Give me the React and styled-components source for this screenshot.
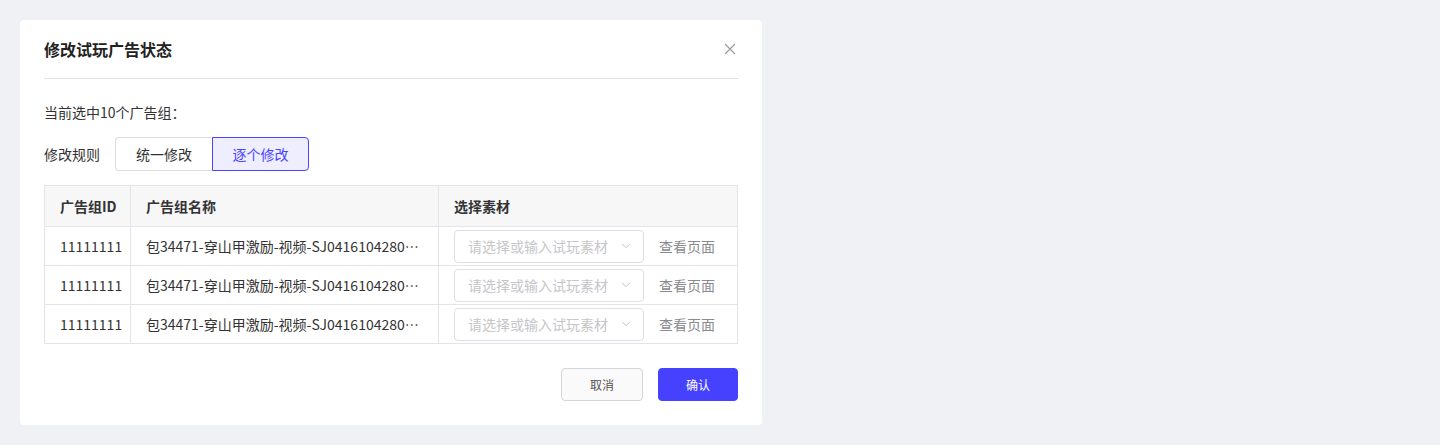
import React, { useState } from 'react'
import styled, { createGlobalStyle } from 'styled-components'

const GlobalStyle = createGlobalStyle`
  body {
    margin: 0;
    background: #f0f1f5;
    font-family: "Noto Sans CJK SC", "Liberation Sans", sans-serif;
    color: #333;
  }
`

const Page = styled.div`
  padding: 20px;
  height: 445px;
  box-sizing: border-box;
`

const Modal = styled.div`
  width: 742px;
  height: 405px;
  box-sizing: border-box;
  background: #fff;
  border-radius: 4px;
  padding: 0 24px;
  display: flex;
  flex-direction: column;
`

const Header = styled.div`
  display: flex;
  align-items: center;
  justify-content: space-between;
  height: 58px;
  border-bottom: 1px solid #e1e1e8;
`

const Title = styled.h2`
  margin: 0;
  font-size: 16px;
  font-weight: 600;
  color: #222;
`

const CloseButton = styled.button`
  border: 0;
  background: none;
  padding: 0;
  margin-right: 2px;
  display: flex;
  color: #9a9a9a;
  cursor: pointer;
`

const Info = styled.div`
  margin-top: 22px;
  font-size: 14px;
  line-height: 22px;
  color: #333;
`

const RuleRow = styled.div`
  display: flex;
  align-items: center;
  margin-top: 14px;
  gap: 15px;
`

const Label = styled.span`
  font-size: 14px;
  color: #333;
`

const Segmented = styled.div`
  display: flex;
`

const Segment = styled.button`
  width: 97px;
  height: 34px;
  box-sizing: border-box;
  font-family: inherit;
  font-size: 14px;
  cursor: pointer;
  border: 1px solid ${p => (p.active ? '#4a44ff' : '#dcdce2')};
  background: ${p => (p.active ? '#efeeff' : '#fff')};
  color: ${p => (p.active ? '#4a44ff' : '#333')};
  border-radius: ${p => (p.first ? '4px 0 0 4px' : '0 4px 4px 0')};
  ${p => (p.first ? 'border-right: none;' : '')}
  ${p => (!p.active && !p.first ? 'border-left: none;' : '')}
`

const Table = styled.table`
  margin-top: 14px;
  width: 694px;
  border-collapse: collapse;
  font-size: 14px;
  table-layout: fixed;
`

const Th = styled.th`
  height: 40px;
  background: #f7f7f8;
  border: 1px solid #e4e4ea;
  text-align: left;
  font-weight: 600;
  color: #333;
  white-space: nowrap;
  padding: ${p => (p.narrow ? '0 0 0 15px' : '0 15px')};
`

const Td = styled.td`
  height: 38px;
  border: 1px solid #e4e4ea;
  padding: ${p => (p.narrow ? '0 0 0 15px' : '0 15px')};
  color: #333;
  white-space: nowrap;
  overflow: hidden;
  text-overflow: ${p => (p.narrow ? 'clip' : 'ellipsis')};
`

const PickCell = styled.div`
  display: flex;
  align-items: center;
  gap: 15px;
`

const Select = styled.div`
  width: 190px;
  height: 33px;
  box-sizing: border-box;
  border: 1px solid #dedee4;
  border-radius: 4px;
  display: flex;
  align-items: center;
  justify-content: space-between;
  padding: 0 12px 0 13px;
  color: #c6c6ca;
  font-size: 14px;
`

const LinkText = styled.span`
  color: #8a8a8f;
  font-size: 14px;
`

const Footer = styled.div`
  display: flex;
  justify-content: flex-end;
  gap: 15px;
  margin-top: 24px;
`

const Button = styled.button`
  width: ${p => (p.primary ? '80px' : '82px')};
  height: 33px;
  box-sizing: border-box;
  font-family: inherit;
  font-size: 12px;
  border-radius: 4px;
  cursor: pointer;
  border: 1px solid ${p => (p.primary ? '#4640ff' : '#d4d4da')};
  background: ${p => (p.primary ? '#4640ff' : '#fafafa')};
  color: ${p => (p.primary ? '#fff' : '#555')};
`

const CloseIcon = () => (
  <svg width="12" height="12" viewBox="0 0 12 12">
    <path d="M1 1L11 11M11 1L1 11" stroke="currentColor" strokeWidth="1.1" />
  </svg>
)

const ChevronDown = () => (
  <svg width="10" height="6" viewBox="0 0 10 6">
    <path d="M1 1L5 4.5L9 1" fill="none" stroke="#c6c6ca" strokeWidth="1" />
  </svg>
)

const rows = [1, 2, 3].map(i => ({
  key: i,
  id: '11111111',
  name: '包34471-穿山甲激励-视频-SJ04161042800001',
}))

export default function App() {
  const [rule, setRule] = useState('each')

  return (
    <>
      <GlobalStyle />
      <Page>
        <Modal>
          <Header>
            <Title>修改试玩广告状态</Title>
            <CloseButton>
              <CloseIcon />
            </CloseButton>
          </Header>
          <Info>当前选中10个广告组：</Info>
          <RuleRow>
            <Label>修改规则</Label>
            <Segmented>
              <Segment first active={rule === 'all'} onClick={() => setRule('all')}>
                统一修改
              </Segment>
              <Segment active={rule === 'each'} onClick={() => setRule('each')}>
                逐个修改
              </Segment>
            </Segmented>
          </RuleRow>
          <Table>
            <colgroup>
              <col style={{ width: 86 }} />
              <col style={{ width: 308 }} />
              <col />
            </colgroup>
            <thead>
              <tr>
                <Th narrow>广告组ID</Th>
                <Th>广告组名称</Th>
                <Th>选择素材</Th>
              </tr>
            </thead>
            <tbody>
              {rows.map(r => (
                <tr key={r.key}>
                  <Td narrow>{r.id}</Td>
                  <Td>{r.name}</Td>
                  <Td>
                    <PickCell>
                      <Select>
                        请选择或输入试玩素材
                        <ChevronDown />
                      </Select>
                      <LinkText>查看页面</LinkText>
                    </PickCell>
                  </Td>
                </tr>
              ))}
            </tbody>
          </Table>
          <Footer>
            <Button>取消</Button>
            <Button primary>确认</Button>
          </Footer>
        </Modal>
      </Page>
    </>
  )
}
